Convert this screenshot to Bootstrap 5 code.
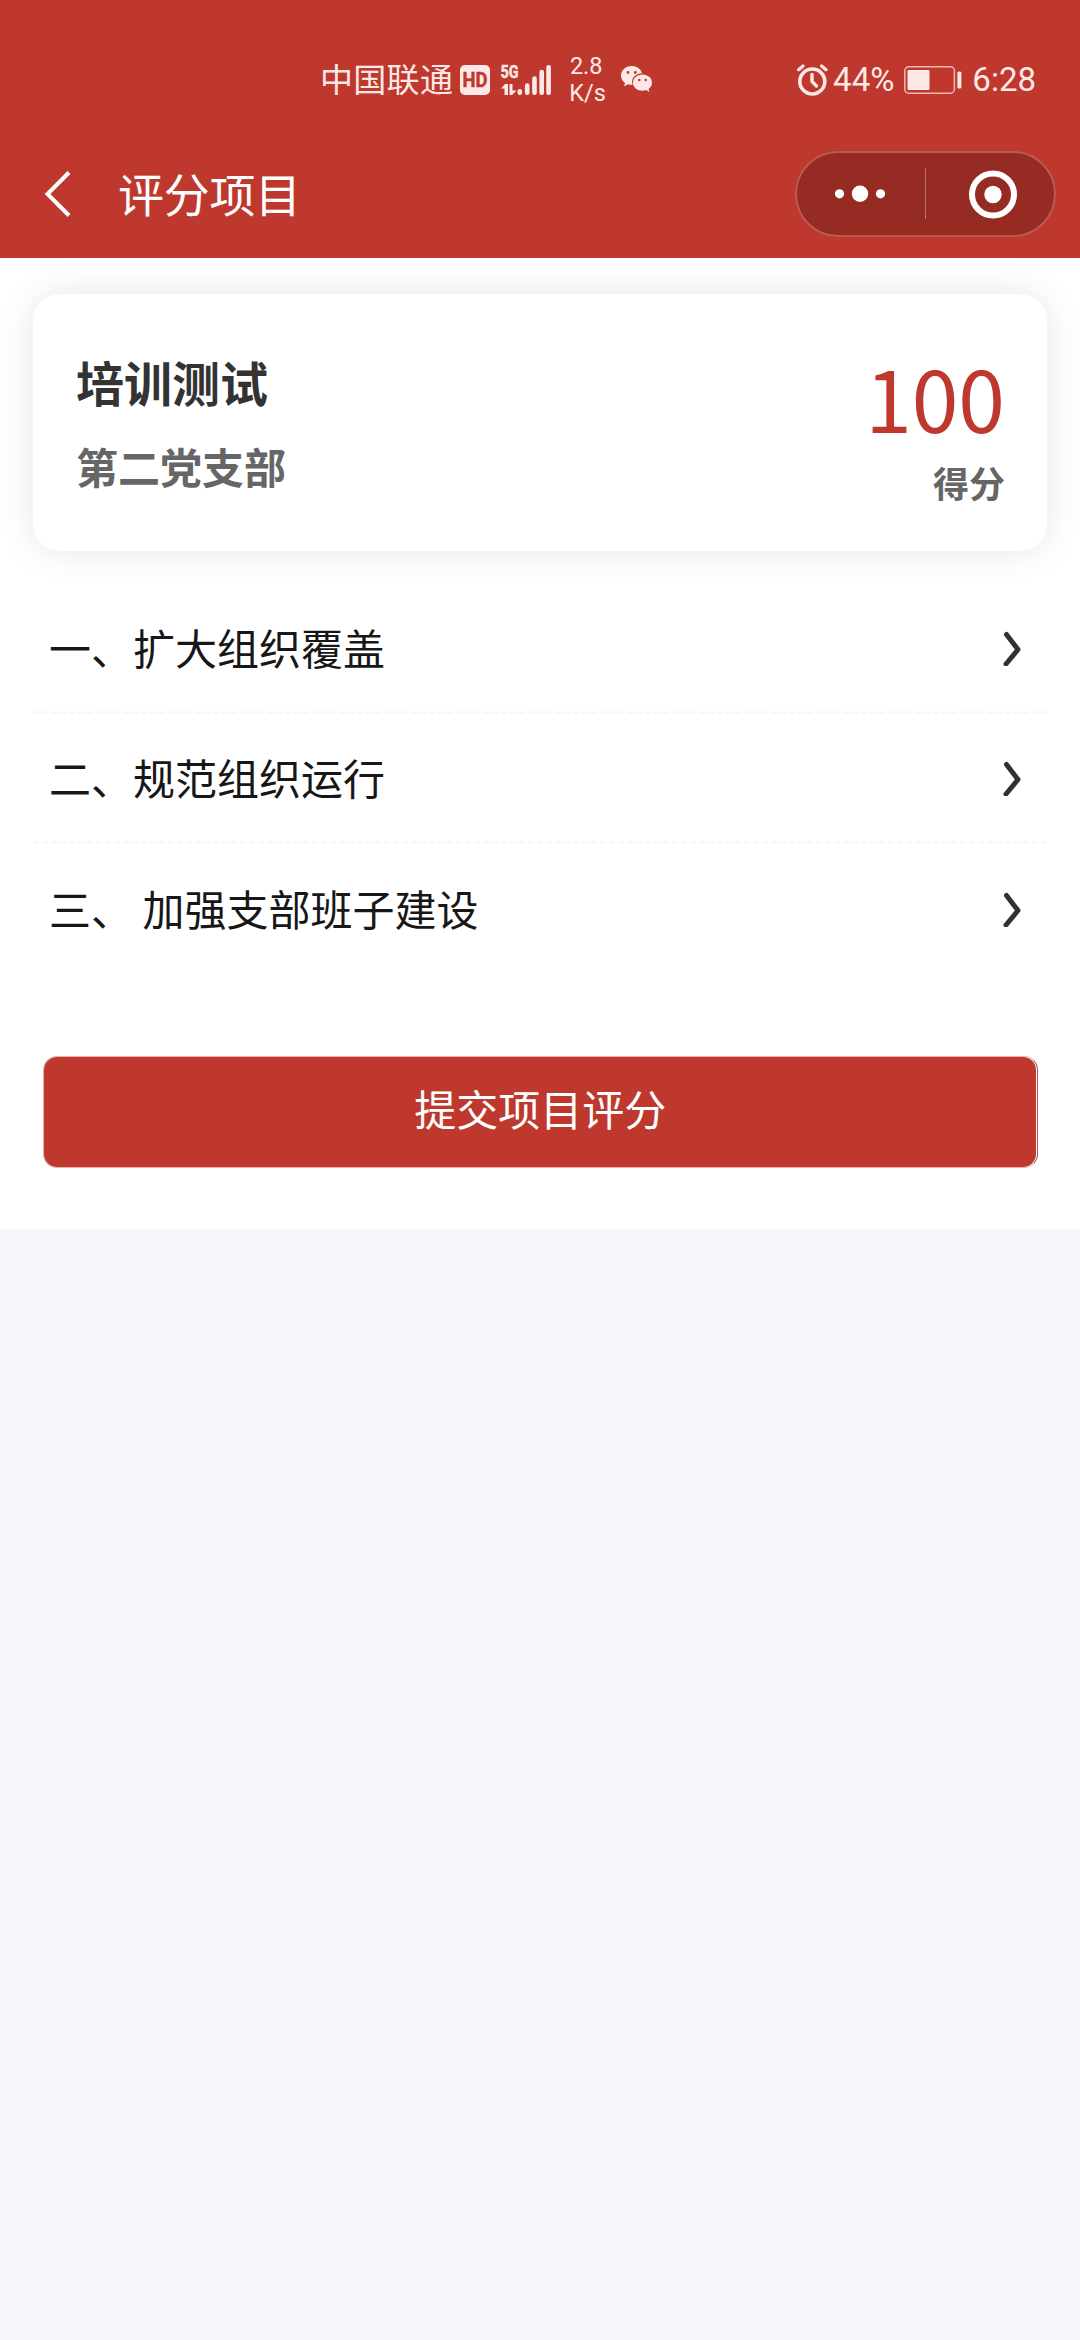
<!DOCTYPE html>
<html lang="zh-CN">
<head>
<meta charset="utf-8">
<meta name="viewport" content="width=device-width, initial-scale=1">
<title>评分项目</title>
<link href="https://cdn.jsdelivr.net/npm/bootstrap@5.3.0/dist/css/bootstrap.min.css" rel="stylesheet">
<style>
:root{--party-red:#bf382d;--status-ink:#fce9e7}
body{background:#f7f7fc;font-family:"Noto Sans CJK SC",sans-serif;color:#171717;width:1080px;min-height:2340px}
.top-area{background:var(--party-red);height:258px}
.status-line{height:130px;padding:30px 44px 0 320px;color:var(--status-ink);font-size:33px;line-height:48px}
.status-line svg{flex:none;display:block}
.status-line .carrier{margin-top:-4px;letter-spacing:.3px}
.hd-mark{margin-left:7px}
.latin{font-family:Roboto,sans-serif}
.net-speed{font-size:23.5px;line-height:27px;margin-left:17px;width:34px;text-align:center;white-space:nowrap}
.wechat-mark{margin-left:18px}
.level{margin-left:5px}
.battery,.clock{margin-left:10px}
.title-line{height:128px;padding:0 24px 0 44px}
.title-line h1{font-size:46px;line-height:64px;margin:0 0 5px 46px;letter-spacing:-.3px}
.capsule{width:261px;height:86px;background:#952b23;border:2px solid #b85b53}
.content-area{padding:36px 33px 62px;height:971px}
.score-card{height:257px;border-radius:27px;border:0;padding:55px 42px 0 43px;box-shadow:0 0 36px rgba(0,0,0,.1)}
.score-card h2{font-size:48px;line-height:64px;color:#333;margin:0}
.branch{font-size:42px;line-height:56px;color:#666;margin-top:25px}
.score-num{font-size:84px;line-height:90px;color:var(--party-red);margin-top:3px}
.score-tag{font-size:36px;line-height:48px;color:#666;margin-top:16px}
.item-list{margin-top:33px}
.item-list .list-group-item{height:130px;padding:0 26px 0 16px;border:0;border-bottom:3px dashed #f7f7fc;font-size:42px;color:#171717;background:none;white-space:pre}
.item-list .list-group-item span{margin-bottom:3px}
.item-list .list-group-item:last-child{border-bottom-color:transparent}
.submit-wrap{margin:82px 9px 0 10px;width:995px;height:112px;border:1px solid #e9b3ae;border-right-color:#a8524b;border-radius:14px;padding:0 1.500px 0 0}
.submit-btn{--bs-btn-bg:#bf382d;--bs-btn-color:#fff;--bs-btn-hover-bg:#ad3027;--bs-btn-hover-color:#fff;width:100%;height:110px;border:0;border-radius:13px;font-size:42px;line-height:60px;padding:0 0 9px 1px}
</style>
</head>
<body>
<header class="top-area">
  <div class="status-line d-flex align-items-center">
    <span class="carrier">中国联通</span>
    <svg class="hd-mark" width="30" height="30" viewBox="0 0 30 30"><rect width="30" height="30" rx="5" fill="#fce9e7"/><text x="15" y="22" text-anchor="middle" textLength="25" lengthAdjust="spacingAndGlyphs" font-family="Roboto" font-weight="700" font-size="19.500" fill="#bf382d" stroke="#bf382d" stroke-width=".5">HD</text></svg>
    <svg class="ms-2" width="54" height="48" viewBox="498 54 54 48" fill="#fce9e7"><text x="500.500" y="76.300" textLength="18" lengthAdjust="spacingAndGlyphs" font-family="Roboto" font-weight="700" font-size="19" stroke="#fce9e7" stroke-width=".5">5G</text><path d="M500.500 87l4.500-5h3v11h-3.500v-6.500h-4zM509.500 82h3v6.500h4l-4.500 4.500h-2.500z"/><g stroke="#fce9e7" stroke-width="4.600" stroke-linecap="round"><path d="M519.800 89.300v1.500M527.200 83.500v7.300M534.500 76.500v14.300M541.700 70v20.800M548.600 65.300v25.500"/></g></svg>
    <div class="net-speed latin">2.8<br>K/s</div>
    <svg class="wechat-mark" width="32" height="28" viewBox="0 0 32 28"><path fill="#fce9e7" d="M11 0C4.800 0 0 4.200 0 9.500c0 3 1.600 5.600 4 7.400L3 20.300l4.200-2.100q2 .6 4.600.5A10 10 0 0 1 11 16c0-5 4.700-8.600 10-8.700C19.800 3 15.800 0 11 0z"/><path fill="#fce9e7" d="M21.500 8.600c-5.300 0-9.500 3.600-9.500 8.100s4.200 8 9.500 8q1.900 0 3.600-.6l3.300 1.900-.9-3.100C29.700 21.400 31 19.200 31 16.700c0-4.500-4.200-8.100-9.500-8.100z"/><g fill="#bf382d"><circle cx="7" cy="6.500" r="1.400"/><circle cx="14.300" cy="6.500" r="1.400"/><circle cx="18.300" cy="14" r="1.200"/><circle cx="24.700" cy="14" r="1.200"/></g></svg>
    <svg class="ms-auto" width="31" height="32" viewBox="0 0 31 32" fill="none" stroke="#fce9e7" stroke-linecap="round" stroke-linejoin="round"><circle cx="15.300" cy="17.500" r="12.500" stroke-width="3.600"/><path d="M15 10.500v7l4.500 4.500" stroke-width="3.400"/><path d="M1.600 5.700L6 2M29 5.700L24.600 2" stroke-width="3.200"/></svg>
    <span class="latin level">44%</span>
    <svg class="battery" width="58" height="28" viewBox="0 0 58 28"><rect x=".8" y=".8" width="49.600" height="26.400" rx="4" fill="none" stroke="#f2b9b4" stroke-width="1.500"/><rect x="3.500" y="4" width="22" height="20" rx="1" fill="#fce9e7"/><rect x="53.400" y="5.500" width="4" height="17" rx="1.500" fill="#fce9e7"/></svg>
    <span class="latin clock">6:28</span>
  </div>
  <nav class="title-line d-flex align-items-center text-white">
    <svg width="28" height="50" viewBox="0 0 28 50" fill="none" stroke="#fff" stroke-width="4"><path d="M25 3.500L3.500 25 25 46.500"/></svg>
    <h1 class="fw-normal">评分项目</h1>
    <div class="capsule rounded-pill ms-auto">
      <svg class="d-block" width="257" height="82" viewBox="797 153 257 82" fill="#fff"><circle cx="839.500" cy="193.800" r="4.600"/><circle cx="860" cy="193.800" r="8.200"/><circle cx="880.500" cy="193.800" r="4.600"/><rect x="925" y="168" width="1" height="51" fill="#bd736e"/><circle cx="993" cy="194.500" r="21" fill="none" stroke="#fff" stroke-width="6"/><circle cx="993" cy="194.500" r="8.700"/></svg>
    </div>
  </nav>
</header>
<main class="content-area bg-white">
  <section class="card score-card flex-row justify-content-between align-items-start">
    <div>
      <h2 class="fw-bold">培训测试</h2>
      <div class="branch fw-bold">第二党支部</div>
    </div>
    <div class="text-end">
      <div class="score-num">100</div>
      <div class="score-tag fw-bold">得分</div>
    </div>
  </section>
  <div class="list-group list-group-flush item-list">
    <a class="list-group-item d-flex align-items-center justify-content-between"><span>一、扩大组织覆盖</span><svg width="18" height="36" viewBox="0 0 18 36" fill="none" stroke="#303133" stroke-width="5" stroke-linecap="round" stroke-linejoin="round"><path d="M3.500 4.500L15 19.500 3 34"/></svg></a>
    <a class="list-group-item d-flex align-items-center justify-content-between"><span>二、规范组织运行</span><svg width="18" height="36" viewBox="0 0 18 36" fill="none" stroke="#303133" stroke-width="5" stroke-linecap="round" stroke-linejoin="round"><path d="M3.500 4.500L15 19.500 3 34"/></svg></a>
    <a class="list-group-item d-flex align-items-center justify-content-between"><span>三、 加强支部班子建设</span><svg width="18" height="36" viewBox="0 0 18 36" fill="none" stroke="#303133" stroke-width="5" stroke-linecap="round" stroke-linejoin="round"><path d="M3.500 4.500L15 19.500 3 34"/></svg></a>
  </div>
  <div class="submit-wrap">
    <button type="button" class="btn submit-btn d-block">提交项目评分</button>
  </div>
</main>
<script src="https://cdn.jsdelivr.net/npm/bootstrap@5.3.0/dist/js/bootstrap.bundle.min.js"></script>
</body>
</html>
